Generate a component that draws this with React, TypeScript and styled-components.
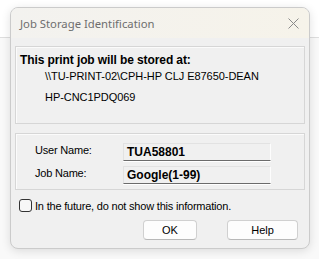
import React from "react";
import styled, { createGlobalStyle } from "styled-components";

const Global = createGlobalStyle`
  html, body { margin: 0; padding: 0; }
  body {
    width: 319px;
    height: 259px;
    overflow: hidden;
    background: linear-gradient(to bottom, #ffffff 0, #ffffff 37px, #dedede 37px, #dedede 38px, #f9f9f9 38px);
    font-family: "Liberation Sans", Arial, sans-serif;
  }
  #root { padding-top: 7px; }
`;

const Dialog = styled.div`
  box-sizing: border-box;
  margin-left: 10px;
  width: 300px;
  height: 242px;
  border: 1px solid #cbcbcb;
  border-radius: 8px;
  overflow: hidden;
  background: #f0f0f0;
  box-shadow: 0 2px 10px rgba(0, 0, 0, 0.12);
  display: flex;
  flex-direction: column;
`;

const TitleBar = styled.div`
  height: 30px;
  flex: none;
  display: flex;
  align-items: center;
  justify-content: space-between;
  padding: 0 10px 0 9px;
  background: linear-gradient(to right, #f3f2ef, #f6f3ea);
`;

const Title = styled.span`
  font-family: "Segoe UI", "Noto Sans", sans-serif;
  font-size: 11.3px;
  color: #6e6e6e;
`;

const Client = styled.div`
  flex: 1;
  display: flex;
  flex-direction: column;
  padding: 8px 4px 0 4px;
  font-size: 11px;
  color: #000;
`;

const GroupBox = styled.div<{ $h: number; $mt: number }>`
  box-sizing: border-box;
  height: ${(p) => p.$h}px;
  margin-top: ${(p) => p.$mt}px;
  border: 1px solid #d6d6d6;
  box-shadow: inset 1px 1px 0 #fbfbfb;
`;

const StoredHeading = styled.div`
  font-weight: bold;
  font-size: 12px;
  line-height: 16px;
  margin: 5px 0 0 4px;
  letter-spacing: -0.1px;
`;

const PathLine = styled.div<{ $gap: number }>`
  line-height: 16px;
  margin: ${(p) => p.$gap}px 0 0 29px;
  letter-spacing: -0.05px;
`;

const Fields = styled.div`
  display: grid;
  grid-template-columns: 88px 148px;
  row-gap: 5px;
  padding: 9px 0 0 19px;
  align-items: center;
`;

const Label = styled.span`
  margin-top: -4px;
  letter-spacing: -0.2px;
`;

const Field = styled.div`
  box-sizing: border-box;
  height: 18px;
  border-top: 1px solid #e2e2e2;
  border-left: 1px solid #e2e2e2;
  border-right: 1px solid #fdfdfd;
  border-bottom: 1px solid #6b6b6b;
  box-shadow: 0 1px 0 #ffffff;
  font-weight: bold;
  font-size: 12px;
  line-height: 16px;
  padding-left: 3px;
`;

const CheckRow = styled.label`
  display: flex;
  align-items: center;
  gap: 3px;
  margin: 9px 0 0 4px;
  height: 13px;
  letter-spacing: -0.2px;
`;

const Box = styled.span`
  box-sizing: border-box;
  width: 13px;
  height: 13px;
  border: 1px solid #333;
  border-radius: 3px;
  background: #f7f7f7;
`;

const Buttons = styled.div`
  display: flex;
  justify-content: flex-end;
  gap: 30px;
  margin-top: 8px;
  padding-right: 7px;
`;

const Button = styled.button<{ $w: number }>`
  box-sizing: border-box;
  width: ${(p) => p.$w}px;
  height: 20px;
  border: 1px solid #d0d0d0;
  border-bottom-color: #b8b8b8;
  border-radius: 4px;
  background: #fdfdfd;
  font-family: "Liberation Sans", Arial, sans-serif;
  font-size: 11px;
  color: #000;
  padding: 0;
`;

const CloseIcon = () => (
  <svg width="11" height="11" viewBox="0 0 11 11">
    <path d="M0.5 0.5L10.5 10.5M10.5 0.5L0.5 10.5" stroke="#8a8a8a" strokeWidth="1" fill="none" />
  </svg>
);

export default function App() {
  return (
    <>
      <Global />
      <Dialog>
        <TitleBar>
          <Title>Job Storage Identification</Title>
          <CloseIcon />
        </TitleBar>
        <Client>
          <GroupBox $h={78} $mt={0}>
            <StoredHeading>This print job will be stored at:</StoredHeading>
            <PathLine $gap={0}>\\TU-PRINT-02\CPH-HP CLJ E87650-DEAN</PathLine>
            <PathLine $gap={5}>HP-CNC1PDQ069</PathLine>
          </GroupBox>
          <GroupBox $h={57} $mt={9}>
            <Fields>
              <Label>User Name:</Label>
              <Field>TUA58801</Field>
              <Label>Job Name:</Label>
              <Field>Google(1-99)</Field>
            </Fields>
          </GroupBox>
          <CheckRow>
            <Box />
            <span>In the future, do not show this information.</span>
          </CheckRow>
          <Buttons>
            <Button $w={54}>OK</Button>
            <Button $w={71}>Help</Button>
          </Buttons>
        </Client>
      </Dialog>
    </>
  );
}
